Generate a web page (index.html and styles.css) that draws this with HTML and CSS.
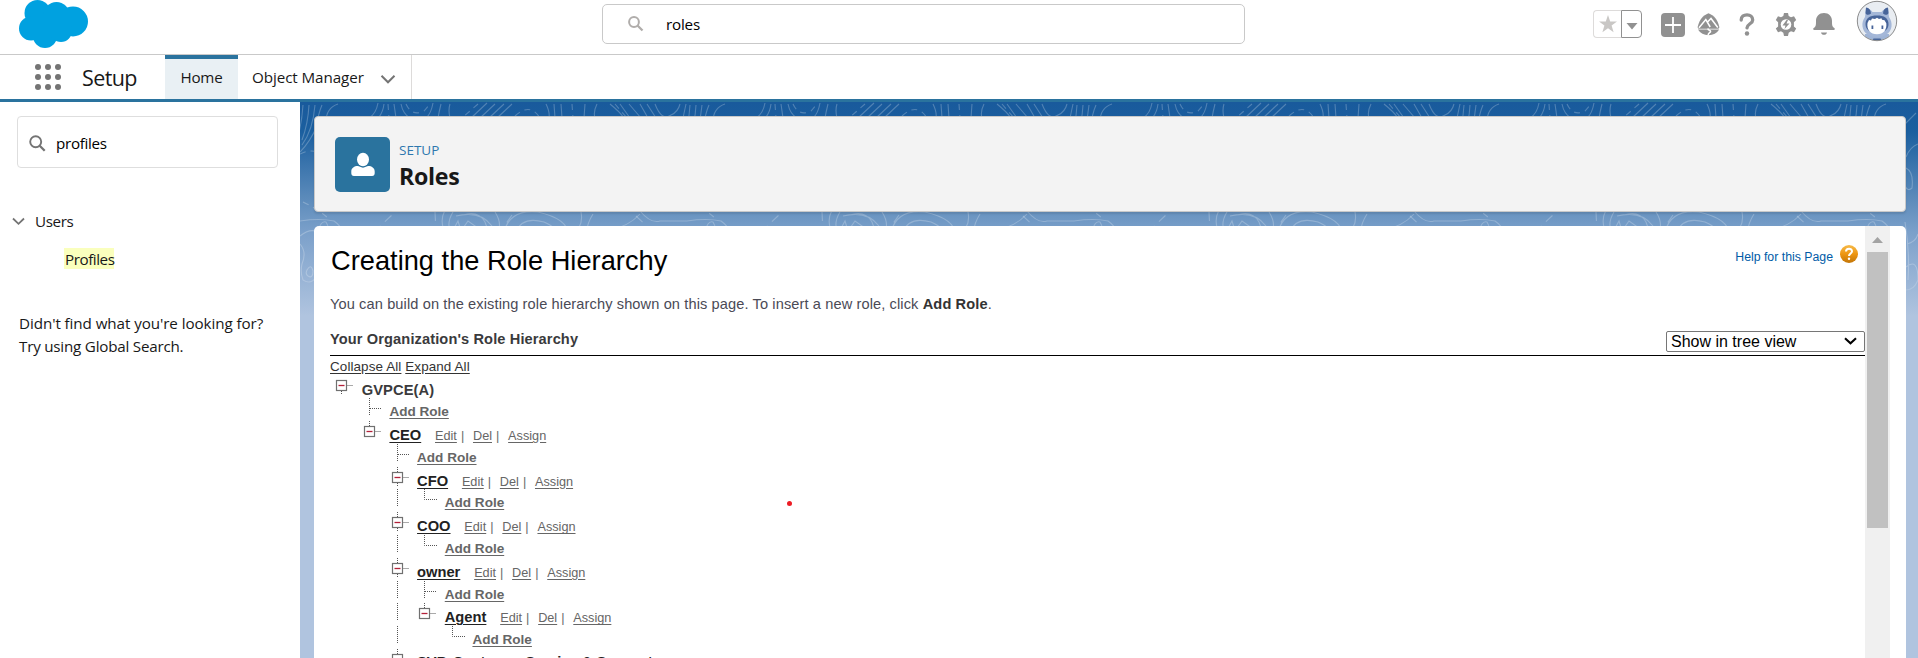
FILE: index.html
```html
<!DOCTYPE html>
<html lang="en">
<head>
<meta charset="utf-8">
<title>Roles | Setup</title>
<link rel="stylesheet" href="styles.css">
</head>
<body>
<svg class="defs" width="0" height="0" aria-hidden="true">
  <defs>
    <g id="box">
      <path class="dots" d="M16.500 10.500H23"/>
      <rect x="6.500" y="5.500" width="10" height="10" fill="#fff" stroke="#707070" stroke-width="1.200"/>
      <path d="M8.500 10.500h6" stroke="#b3213a" stroke-width="1.300"/>
    </g>
    <g id="tee"><path class="dots" d="M11.500 0V18M12 10.500H24"/></g>
    <g id="ell"><path class="dots" d="M11.500 0V10.500H24"/></g>
    <g id="bar"><path class="dots" d="M11.500 0V18"/></g>
    <g id="up"><path class="dots" d="M11.500 0V5"/></g>
    <g id="down"><path class="dots" d="M11.500 16V20"/></g>
  </defs>
</svg>

<header class="global">
  <svg class="cloud" width="72" height="50" viewBox="0 0 72 50"><g fill="#00a1e0"><circle cx="18.500" cy="13" r="13"/><circle cx="37.500" cy="15" r="13"/><circle cx="54" cy="21.500" r="15"/><circle cx="12" cy="28.500" r="12"/><circle cx="26" cy="36" r="12"/><circle cx="42" cy="31" r="11"/><path d="M12 14h40v18H12z"/></g></svg>
  <div class="search">
    <svg width="18" height="18" viewBox="0 0 18 18" fill="none" stroke="#b0adab"><circle cx="7" cy="7" r="4.900" stroke-width="2"/><path d="M10.500 10.500l5 5" stroke-width="2.300"/></svg>
    <span>roles</span>
  </div>
  <div class="tools">
    <div class="fav">
      <span class="fav-star"><svg width="18" height="18" viewBox="0 0 18 18"><path fill="#c9c7c5" d="M9 0l2.200 6.400H18l-5.400 4.100 2 6.700L9 13.200l-5.600 4 2-6.700L0 6.400h6.800z"/></svg></span>
      <span class="fav-menu"><svg width="12" height="8" viewBox="0 0 12 8"><path fill="#919191" d="M.5 1h11L6 7.500z"/></svg></span>
    </div>
    <svg class="t-add" width="24" height="24" viewBox="0 0 24 24"><rect width="24" height="24" rx="4" fill="#919191"/><path d="M12 4v16M4 12h16" stroke="#fff" stroke-width="1.800"/></svg>
    <svg class="t-trail" width="23" height="23" viewBox="0 0 23 23"><path fill="#919191" d="M11.500.3C17 2.500 20.500 6.500 22.200 13.500c.3 1.300-.1 2.200-1.200 2.200H2c-1.100 0-1.500-.9-1.200-2.200C2.500 6.500 6 2.500 11.500.3z"/><path fill="none" stroke="#fff" stroke-width="1.500" d="M2 14.800L8.800 6.500l4.400 7.500M10.500 9L14 5.500l6.800 9"/><path fill="#919191" d="M1 16.500h21.200c-2.300 3.600-6 5.500-10.600 5.800C7 22 3.300 20.100 1 16.500z"/><path fill="none" stroke="#fff" stroke-width="1.500" d="M11.500 15.500c-2 1.500 4 2 1.500 3.800-1 .8-2 1.500-2 3.500"/></svg>
    <svg class="t-help" width="16" height="23" viewBox="0 0 16 23"><path fill="none" stroke="#919191" stroke-width="3.300" stroke-linecap="round" d="M2.200 7C2.200 3.500 4.700 1.900 8 1.900s5.700 2 5.700 5c0 3.900-5.500 3.800-5.700 8"/><circle cx="8" cy="20.500" r="2.200" fill="#919191"/></svg>
    <svg class="t-gear" width="22" height="23" viewBox="0 0 22 23"><path fill="#919191" d="M9 0h4l.7 3 2.300 1.300 3-1 2.200 3.700-2.300 2.200v4.200l2.300 2.200-2.200 3.700-3-1-2.300 1.500L13 23H9l-.7-3.200L6 18.300l-3 1-2.200-3.700 2.300-2.200V9.200L.8 7 3 3.300l3 1L8.300 3z"/><circle cx="11" cy="11.500" r="5.300" fill="#fff"/><path fill="#919191" d="M11.500 7l-4 5.500h3L9.500 16l5-5.500h-3L13 7z"/></svg>
    <svg class="t-bell" width="22" height="23" viewBox="0 0 22 23"><path fill="#919191" d="M11 0c4.800 0 8 3.300 8 8 0 3.200 0 5.200 1.300 6.300.8.700 1.500.8 1.500 1.700 0 .6-.4.900-1 .9H1.200c-.6 0-1-.3-1-.9 0-.9.700-1 1.500-1.700C3 13.200 3 11.200 3 8c0-4.700 3.200-8 8-8zM8 19.500h6c-.3 1.500-1.500 2.300-3 2.300s-2.700-.8-3-2.300z"/></svg>
    <svg class="t-user" width="42" height="42" viewBox="0 0 42 42"><defs><clipPath id="face"><circle cx="21" cy="21" r="19.500"/></clipPath></defs><circle cx="21" cy="21" r="20" fill="#e9edf2"/><g clip-path="url(#face)"><path fill="#9fb4d6" d="M8 42l1-8h24l1 8z"/><path fill="#a4b7d8" d="M10 8c3 .5 5 2 6.500 4h9C27 10 29 8.500 32 8l1 9c2 3 3 6 2.500 9.500C34.500 34 28 37 21 37S7.500 34 6.500 26.500C6 23 7 20 9 17z"/><path fill="#476499" d="M10 7.500c3 .3 4.800 2.400 5 6-2.500 2-5 1.500-5.500-.5zM32 7.500c-3 .3-4.800 2.400-5 6 2.500 2 5 1.500 5.500-.5z"/><path fill="#476499" d="M9.500 24C9.500 18 14 15.500 21 15.500S32.500 18 32.500 24c0 3-1 5-3 6.500h-17C10.500 29 9.500 27 9.500 24z"/><path fill="#fff" d="M11.500 23l1.500-3 2 .5 1-2 3 .5 2-1.200 2 1.200 2.500-.7.500 1.500 2.500.5 1.800 3c.8 6.500-2.800 11-9.300 11S10.500 29.500 11.500 23z"/><path fill="#476499" d="M15.500 25.500h1.800v3.600h-1.800zM25.500 25.500h1.800v3.600h-1.800z"/><path fill="#476499" d="M17.500 38.500h7l2 3h-11z"/></g><circle cx="21" cy="21" r="19.700" fill="none" stroke="#8d8d8d" stroke-width="1"/></svg>
  </div>
</header>

<nav class="nav">
  <svg class="waffle" width="28" height="28" viewBox="0 0 28 28" fill="#747474"><circle cx="4" cy="4" r="3"/><circle cx="14" cy="4" r="3"/><circle cx="24" cy="4" r="3"/><circle cx="4" cy="14" r="3"/><circle cx="14" cy="14" r="3"/><circle cx="24" cy="14" r="3"/><circle cx="4" cy="24" r="3"/><circle cx="14" cy="24" r="3"/><circle cx="24" cy="24" r="3"/></svg>
  <div class="app">Setup</div>
  <div class="tab active">Home</div>
  <div class="tab om"><span>Object Manager</span><svg width="16" height="11" viewBox="0 0 16 11"><path d="M1.500 1.800L8 8.300l6.500-6.500" fill="none" stroke="#747474" stroke-width="2"/></svg></div>
</nav>

<div class="body">
  <aside class="side">
    <div class="find">
      <svg width="17" height="17" viewBox="0 0 17 17" fill="none" stroke="#747474"><circle cx="6.700" cy="6.700" r="5.500" stroke-width="1.900"/><path d="M10.700 10.700l5 5" stroke-width="2.300"/></svg>
      <span>profiles</span>
    </div>
    <div class="group"><svg width="13" height="9" viewBox="0 0 13 9"><path d="M1 1.500l5.500 5.300L12 1.500" fill="none" stroke="#747474" stroke-width="1.800"/></svg><span>Users</span></div>
    <div class="leaf"><mark>Profiles</mark></div>
    <p class="miss"><span class="m1">Didn't find what you're looking for?</span><br><span class="m2">Try using Global Search.</span></p>
  </aside>

  <main class="main">
    <svg class="topo" width="1618" height="220" aria-hidden="true">
      <defs>
        <pattern id="contour" width="387" height="220" patternUnits="userSpaceOnUse">
          <g fill="none" stroke="#fff" stroke-opacity=".24" stroke-width="1.100">
            <path d="M3 3Q2 20-2 34M9 3Q8 22 2 38M15 3Q13 28 2 43M22 3Q18 12 17 24Q10 40 0 50M38 2Q26 6 26 20M78 1Q76 12 69 16M84 2Q83 10 79 15M94 2l2 14M101 2Q103 12 110 16M133 1Q131 12 126 16M141 2Q139 10 138 16M150 2Q148 8 150 16M187 1L171 16M195 2L180 16M204 2L189 16M212 2L197 16M246 2Q250 10 249 16M254 2l1 14M261 2l1 14M285 2l-1 14M297 2Q293 10 295 16M310 2Q320 10 324 16M320 2l10 14M329 2l12 14M340 2l8 14M347 2l9 14M355 2Q362 20 371 13Q378 10 380 2M386 2l-3 14"/>
            <path stroke-dasharray="6 5" d="M88 2l1 14M106 2Q112 15 124 9L130 2M178 2L162 16M215 14Q230 0 240 16M272 2l1 14M315 2l12 14M0 52Q12 46 22 52M3 100Q20 108 30 118"/>
            <path d="M0 119Q20 116 34 119Q44 126 40 132M18 132Q20 118 26 120Q30 126 27 132M94 132Q106 121 120 126L130 132M145 108Q138 122 148 134M153 110Q146 121 151 132L158 119L161 129L168 119L178 126L180 132M163 113Q178 108 185 120L190 134M156 114Q180 108 192 124M195 110Q204 124 195 134M216 130Q222 114 244 120Q258 126 254 132M204 130Q210 107 238 110Q268 117 268 132M281 110Q284 126 271 132M293 112Q285 125 288 132M309 128Q328 125 340 112M340 109Q351 122 360 119L387 119"/>
            <path stroke-dasharray="9 6" d="M74 130L92 113M135 110l1 20M212 113L200 130M336 114L355 132"/>
            <path d="M0 134Q10 126 18 130M0 142Q7 150 2 162Q0 170 3 178Q12 184 18 172M7 168q4-7 6 1q0 8-5 5q-3-2-1-6"/>
          </g>
        </pattern>
      </defs>
      <rect width="1606" height="220" fill="url(#contour)"/>
      <g fill="none" stroke="#fff" stroke-opacity=".24" stroke-width="1.100"><path d="M1604 23l12-12M1606 55Q1610 45 1618 42M1606 66Q1614 70 1612 86Q1608 90 1605 84M1605 120Q1610 150 1608 178M1607 142Q1616 140 1618 132M1606 165Q1618 155 1618 178Q1614 188 1606 188"/></g>
    </svg>

    <section class="head">
      <div class="icon"><svg width="26" height="26" viewBox="0 0 26 26" fill="#fff"><ellipse cx="13" cy="7.500" rx="6" ry="6.700"/><path d="M1.300 19.500c0-3.500 3.200-5.400 6.400-5.400 1.500 0 3 1.600 5.300 1.600s3.800-1.600 5.300-1.600c3.200 0 6.400 1.900 6.400 5.400v1.800c0 1.600-.9 2.700-2.600 2.700H3.900c-1.700 0-2.600-1.100-2.600-2.700z"/></svg></div>
      <div><div class="kicker">SETUP</div><h1>Roles</h1></div>
    </section>

    <section class="panel">
      <div class="content">
        <div class="title-row">
          <h2>Creating the Role Hierarchy</h2>
          <div class="help"><span>Help for this Page</span><svg width="20" height="20" viewBox="0 0 20 20"><defs><linearGradient id="og" x2="0" y2="1"><stop offset="0" stop-color="#f6bb4b"/><stop offset=".5" stop-color="#ee9612"/><stop offset="1" stop-color="#c27508"/></linearGradient></defs><circle cx="10" cy="10" r="9" fill="url(#og)"/><path d="M7 7.500C7 3.800 13 3.800 13 7.300c0 2.200-3 2.200-3 4.700" fill="none" stroke="#fff" stroke-width="2"/><circle cx="10" cy="14.800" r="1.200" fill="#fff"/></svg></div>
        </div>
        <p class="desc">You can build on the existing role hierarchy shown on this page. To insert a new role, click <b>Add Role</b>.</p>
        <div class="tree-head">
          <h3>Your Organization's Role Hierarchy</h3>
          <div class="select"><span>Show in tree view</span><svg width="13" height="9" viewBox="0 0 13 9"><path d="M1 1.300l5.500 5 5.500-5" fill="none" stroke="#000" stroke-width="2.100"/></svg></div>
        </div>
        <div class="all"><a>Collapse All</a> <a>Expand All</a></div>
        <div class="tree">
          <div class="row"><svg class="c"><use href="#box"/><use href="#down"/></svg><b class="org">GVPCE(A)</b></div>
          <div class="row"><i class="c"></i><svg class="c"><use href="#tee"/></svg><a class="add">Add Role</a></div>
          <div class="row"><i class="c"></i><svg class="c"><use href="#up"/><use href="#box"/></svg><a class="name">CEO</a><span class="act"><a>Edit</a>|<a>Del</a>|<a>Assign</a></span></div>
          <div class="row"><i class="c"></i><i class="c"></i><svg class="c"><use href="#tee"/></svg><a class="add">Add Role</a></div>
          <div class="row"><i class="c"></i><i class="c"></i><svg class="c"><use href="#up"/><use href="#box"/><use href="#down"/></svg><a class="name">CFO</a><span class="act"><a>Edit</a>|<a>Del</a>|<a>Assign</a></span></div>
          <div class="row"><i class="c"></i><i class="c"></i><svg class="c"><use href="#bar"/></svg><svg class="c"><use href="#ell"/></svg><a class="add">Add Role</a></div>
          <div class="row"><i class="c"></i><i class="c"></i><svg class="c"><use href="#up"/><use href="#box"/><use href="#down"/></svg><a class="name">COO</a><span class="act"><a>Edit</a>|<a>Del</a>|<a>Assign</a></span></div>
          <div class="row"><i class="c"></i><i class="c"></i><svg class="c"><use href="#bar"/></svg><svg class="c"><use href="#ell"/></svg><a class="add">Add Role</a></div>
          <div class="row"><i class="c"></i><i class="c"></i><svg class="c"><use href="#up"/><use href="#box"/><use href="#down"/></svg><a class="name">owner</a><span class="act"><a>Edit</a>|<a>Del</a>|<a>Assign</a></span></div>
          <div class="row"><i class="c"></i><i class="c"></i><svg class="c"><use href="#bar"/></svg><svg class="c"><use href="#tee"/></svg><a class="add">Add Role</a></div>
          <div class="row"><i class="c"></i><i class="c"></i><svg class="c"><use href="#bar"/></svg><svg class="c"><use href="#up"/><use href="#box"/></svg><a class="name">Agent</a><span class="act"><a>Edit</a>|<a>Del</a>|<a>Assign</a></span></div>
          <div class="row"><i class="c"></i><i class="c"></i><svg class="c"><use href="#bar"/></svg><i class="c"></i><svg class="c"><use href="#ell"/></svg><a class="add">Add Role</a></div>
          <div class="row"><i class="c"></i><i class="c"></i><svg class="c"><use href="#up"/><use href="#box"/></svg><a class="name last">SVP, Customer Service &amp; Support</a></div>
        </div>
      </div>
      <div class="scroll"><svg width="11" height="6" viewBox="0 0 11 6"><path fill="#a3a3a3" d="M0 6L5.500 0 11 6z"/></svg><div class="thumb"></div></div>
    </section>
    <span class="pointer"></span>
  </main>
</div>
</body>
</html>
```

FILE: styles.css
```css
* { box-sizing: border-box; }
html, body { margin: 0; height: 658px; overflow: hidden; }
body { background: #fff; color: #181818; font-family: "Open Sans", "Noto Sans", sans-serif; font-size: 15.2px; display: flex; flex-direction: column; }
h1, h2, h3, p { margin: 0; }
svg { display: block; flex: none; }
.defs { position: absolute; }

.global { flex: none; height: 55px; border-bottom: 1px solid #c9c9c9; display: grid; grid-template-columns: 602px 643px 1fr; align-items: start; }
.cloud { margin: 0 0 0 19px; }
.search { height: 40px; margin-top: 4px; border: 1px solid #c9c9c9; border-radius: 5px; display: flex; align-items: center; padding-left: 24px; gap: 21px; color: #000; letter-spacing: -.2px; }
.tools { display: flex; height: 50px; padding-left: 348px; align-items: flex-start; }
.fav { display: flex; width: 49px; height: 28px; margin-top: 10px; }
.fav span { display: flex; align-items: center; justify-content: center; }
.fav-star { width: 28px; border: 1px solid #dddbda; border-right: 0; border-radius: 4px 0 0 4px; }
.fav-menu { width: 21px; border: 1px solid #919191; border-radius: 0 4px 4px 0; padding-top: 3px; }
.t-add { margin: 13px 0 0 19px; }
.t-trail { margin: 13px 0 0 12px; }
.t-help { margin: 13px 0 0 19px; }
.t-gear { margin: 13px 0 0 20px; }
.t-bell { margin: 13px 0 0 16px; }
.t-user { margin: 0 0 0 21px; }

.nav { flex: none; height: 47px; border-bottom: 3px solid #2a739e; display: flex; }
.waffle { margin: 8px 0 0 34px; }
.app { width: 103px; padding-left: 20px; font-size: 21.5px; line-height: 46px; letter-spacing: -.6px; }
.tab { height: 44px; line-height: 45px; }
.active { width: 73px; background: #e9f0f4; border-top: 4px solid #2a739e; line-height: 37px; text-align: center; letter-spacing: -.2px; }
.om { width: 174px; padding-left: 14px; border-right: 1px solid #dddbda; display: flex; align-items: center; gap: 16px; letter-spacing: -.08px; }
.om svg { margin-top: 4px; }

.body { flex: 1; min-height: 0; display: flex; }
.side { width: 300px; flex: none; background: #fff; letter-spacing: -.09px; }
.find { margin: 14px 0 0 17px; width: 261px; height: 52px; border: 1px solid #dedede; border-radius: 4px; display: flex; align-items: center; gap: 10px; padding: 3px 0 0 11px; color: #000; letter-spacing: -.3px; }
.find span { padding-bottom: 2px; }
.group { display: flex; align-items: center; gap: 10px; height: 24px; margin: 41px 0 0 12px; letter-spacing: -.4px; }
.leaf { margin: 15px 0 0 64px; height: 25px; }
mark { display: inline-block; height: 21px; line-height: 22px; padding: 0 0 0 1px; background: #faffbd; color: #181818; letter-spacing: -.45px; }
.miss { margin: 39px 0 0 19px; line-height: 23px; white-space: nowrap; }
.m1 { letter-spacing: -.08px; }
.m2 { letter-spacing: -.22px; }

.main { flex: 1; position: relative; overflow: hidden; background: linear-gradient(#195a9c 0, #1b5f9f 30px, #5f8dbc 100px, #7ba0ca 130px, #b0c4df 214px); display: flex; flex-direction: column; gap: 14px; padding: 14px 12px 0 14px; }
.topo { position: absolute; left: 0; top: 0; -webkit-mask-image: linear-gradient(#000 170px, transparent 218px); mask-image: linear-gradient(#000 170px, transparent 218px); }
.head { position: relative; flex: none; height: 96px; background: #f3f3f3; border: 1px solid #c9c9c9; border-radius: 4px; box-shadow: 0 2px 2px rgba(0,0,0,.1); padding: 20px; display: flex; gap: 9px; }
.icon { width: 55px; height: 55px; border-radius: 5px; background: #2a739e; display: flex; align-items: center; justify-content: center; }
.kicker { color: #2e77ae; font-size: 13.5px; line-height: 18px; letter-spacing: 0; padding-top: 4px; }
h1 { font-size: 23.2px; line-height: 35px; font-weight: 700; letter-spacing: -.3px; }

.panel { position: relative; flex: 1; min-height: 0; background: #fff; border-radius: 5px 5px 0 0; display: flex; padding: 0 16px 0 16px; font-family: "Liberation Sans", Arial, sans-serif; color: #3a3a3c; }
.content { flex: 1; min-width: 0; overflow: hidden; }
.title-row { display: flex; justify-content: space-between; height: 68px; padding: 17px 6px 0 1px; }
h2 { font-size: 27.2px; line-height: 36px; font-weight: 400; color: #000; letter-spacing: .03px; }
.help { display: flex; gap: 6px; height: 20px; color: #015ba7; font-size: 12.3px; line-height: 26px; margin-top: 1px; }
.desc { font-size: 14.6px; line-height: 20px; white-space: nowrap; color: #4a4a56; letter-spacing: .11px; }
.desc b { color: #333; }
.tree-head { margin-top: 17px; height: 25px; border-bottom: 1px solid #000; display: flex; justify-content: space-between; }
h3 { font-size: 14.6px; line-height: 17px; color: #3a3a3c; letter-spacing: .12px; }
.select { width: 199px; height: 21px; border: 1px solid #767676; border-radius: 2px; display: flex; align-items: center; justify-content: space-between; padding: 0 7px 0 4px; font-size: 16px; color: #000; }
.all { height: 19.4px; font-size: 13.45px; line-height: 22px; color: #333; letter-spacing: .1px; }
a { text-decoration: underline; text-underline-offset: 2px; }
.row { display: flex; height: 22.8px; white-space: nowrap; }
.c { width: 27.7px; height: 22.8px; flex: none; overflow: visible; }
.tree .row > svg { margin-left: .3px; margin-right: -.3px; }
.dots { fill: none; stroke: #555; stroke-width: 1; stroke-dasharray: 1 1; }
.org, .name { margin-left: 4px; font-size: 14.7px; font-weight: 700; color: #222; line-height: 29px; }
.last { line-height: 26px; }
.org { color: #3a3a3c; letter-spacing: .1px; line-height: 30px; }
.add { margin-left: 4px; font-size: 13.55px; font-weight: 700; color: #666; line-height: 28.6px; }
.act { margin-left: 13.8px; font-size: 12.7px; color: #666; line-height: 30px; }
.act a + a { margin-left: 8.8px; }
.act a { margin-right: 4px; }
.scroll { width: 25px; flex: none; background: #f0f0f0; padding: 11px 2px 0; }
.scroll svg { margin: 0 auto; }
.thumb { height: 276px; margin-top: 9px; background: #c1c1c1; }
.pointer { position: absolute; left: 487px; top: 399px; width: 5px; height: 5px; border-radius: 50%; background: #ed1c24; }
```
